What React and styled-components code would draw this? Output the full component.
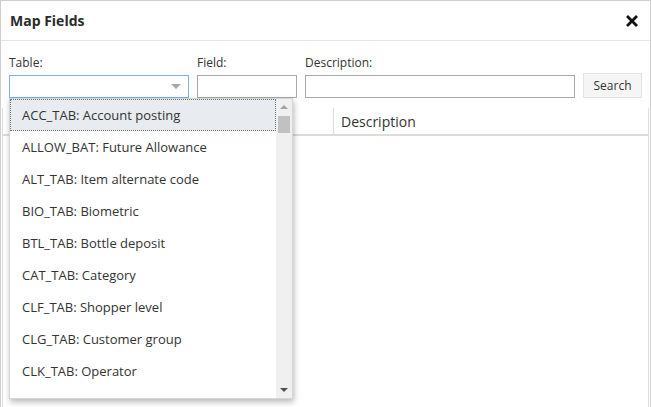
import React, { useState } from "react";
import styled, { createGlobalStyle } from "styled-components";

const GlobalStyle = createGlobalStyle`
  html, body {
    margin: 0;
    padding: 0;
    background: #fff;
    font-family: "Open Sans", "Liberation Sans", sans-serif;
    color: #333;
  }
  * { box-sizing: border-box; }
`;

const tables = [
  "ACC_TAB: Account posting",
  "ALLOW_BAT: Future Allowance",
  "ALT_TAB: Item alternate code",
  "BIO_TAB: Biometric",
  "BTL_TAB: Bottle deposit",
  "CAT_TAB: Category",
  "CLF_TAB: Shopper level",
  "CLG_TAB: Customer group",
  "CLK_TAB: Operator",
];

const Modal = styled.div`
  width: 651px;
  height: 407px;
  border: 1px solid #cfcfcf;
  border-bottom: none;
  background: #fff;
  display: flex;
  flex-direction: column;
  overflow: hidden;
`;

const Header = styled.div`
  height: 40px;
  flex: none;
  display: flex;
  align-items: center;
  justify-content: space-between;
  padding: 0 12px 0 9px;
  border-bottom: 1px solid #e5e5e5;
`;

const Title = styled.h1`
  margin: 0;
  font-size: 14px;
  font-weight: 700;
  color: #2b2b2b;
`;

const CloseButton = styled.button`
  border: none;
  background: transparent;
  padding: 0;
  width: 12px;
  height: 12px;
  display: flex;
  cursor: pointer;
`;

const Form = styled.div`
  display: flex;
  align-items: flex-end;
  gap: 8px;
  padding: 14px 8px 0 8px;
`;

const FieldCol = styled.div`
  position: relative;
  width: ${(p) => p.$w}px;
  display: flex;
  flex-direction: column;
`;

const Label = styled.label`
  font-size: 12px;
  line-height: 16px;
  margin-bottom: 4px;
  color: #333;
`;

const Input = styled.input`
  height: 23px;
  width: 100%;
  border: 1px solid #a9a9a9;
  padding: 0 4px;
  font: inherit;
  font-size: 12px;
  outline: none;
`;

const Select = styled.div`
  height: 23px;
  width: 100%;
  border: 1px solid #7db2e3;
  display: flex;
  align-items: center;
  justify-content: flex-end;
  padding-right: 7px;
  cursor: pointer;
`;

const Caret = styled.span`
  width: 0;
  height: 0;
  border-left: 5px solid transparent;
  border-right: 5px solid transparent;
  border-top: 5px solid #a8a8a8;
`;

const SearchButton = styled.button`
  height: 25px;
  width: 59px;
  background: #f5f5f5;
  border: 1px solid #e3e3e3;
  font-family: inherit;
  font-size: 12px;
  color: #333;
  cursor: pointer;
`;

const Dropdown = styled.div`
  position: absolute;
  top: 100%;
  left: 0;
  width: 284px;
  height: 301px;
  background: #fff;
  border: 1px solid #d6d6d6;
  box-shadow: 1px 3px 6px rgba(0, 0, 0, 0.28);
  display: flex;
  z-index: 10;
`;

const List = styled.ul`
  flex: 1;
  margin: 0;
  padding: 0;
  list-style: none;
  overflow: hidden;
`;

const Item = styled.li`
  height: 32px;
  display: flex;
  align-items: center;
  padding-left: 11px;
  font-size: 13px;
  color: #333;
  white-space: nowrap;
  background: ${(p) => (p.$active ? "#e8ebf0" : "#fff")};
  border: 1px dotted ${(p) => (p.$active ? "#6f6f6f" : "transparent")};
`;

const Scrollbar = styled.div`
  width: 16px;
  flex: none;
  background: #f0f0f0;
  display: flex;
  flex-direction: column;
  align-items: center;
`;

const Arrow = styled.span`
  width: 0;
  height: 0;
  margin: 6px 0;
  border-left: 4px solid transparent;
  border-right: 4px solid transparent;
  ${(p) =>
    p.$up
      ? "border-bottom: 4px solid #a3a3a3;"
      : "border-top: 4px solid #505050; margin-top: auto;"}
`;

const Thumb = styled.span`
  width: 12px;
  height: 17px;
  margin-top: 1px;
  background: #c1c1c1;
`;

const Grid = styled.div`
  flex: 1;
  margin: 10px 1px 0 1px;
  border-left: 1px solid #dcdcdc;
  border-right: 1px solid #dcdcdc;
`;

const GridHead = styled.div`
  display: grid;
  grid-template-columns: 330px 1fr;
  height: 28px;
  border-bottom: 2px solid #dcdcdc;
`;

const HeadCell = styled.div`
  display: flex;
  align-items: center;
  padding-left: 7px;
  font-size: 14px;
  color: #333;
  border-left: ${(p) => (p.$sep ? "1px solid #dcdcdc" : "none")};
`;

export default function App() {
  const [open] = useState(true);

  return (
    <>
      <GlobalStyle />
      <Modal>
        <Header>
          <Title>Map Fields</Title>
          <CloseButton aria-label="Close">
            <svg width="12" height="12" viewBox="0 0 12 12">
              <path
                d="M2 2 L10 10 M10 2 L2 10"
                stroke="#111"
                strokeWidth="2.8"
                strokeLinecap="square"
              />
            </svg>
          </CloseButton>
        </Header>

        <Form>
          <FieldCol $w={180}>
            <Label>Table:</Label>
            <Select>
              <Caret />
            </Select>
            {open && (
              <Dropdown>
                <List>
                  {tables.map((t, i) => (
                    <Item key={t} $active={i === 0}>
                      {t}
                    </Item>
                  ))}
                </List>
                <Scrollbar>
                  <Arrow $up />
                  <Thumb />
                  <Arrow />
                </Scrollbar>
              </Dropdown>
            )}
          </FieldCol>
          <FieldCol $w={100}>
            <Label>Field:</Label>
            <Input />
          </FieldCol>
          <FieldCol $w={270}>
            <Label>Description:</Label>
            <Input />
          </FieldCol>
          <SearchButton>Search</SearchButton>
        </Form>

        <Grid>
          <GridHead>
            <HeadCell />
            <HeadCell $sep>Description</HeadCell>
          </GridHead>
        </Grid>
      </Modal>
    </>
  );
}
